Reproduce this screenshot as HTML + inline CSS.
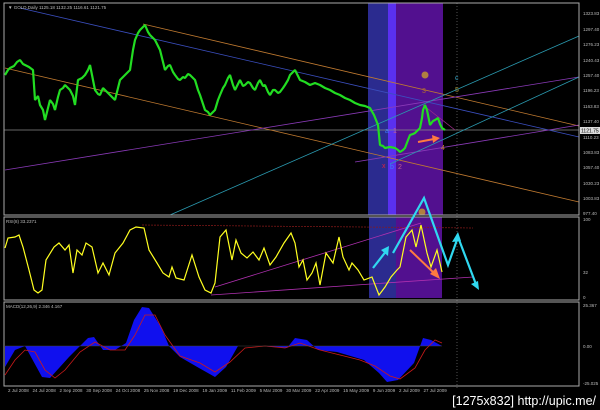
<!DOCTYPE html>
<html><head><meta charset="utf-8"><style>
html,body{margin:0;padding:0;background:#000;width:600px;height:410px;overflow:hidden}
svg{display:block}
text{font-family:"Liberation Sans",sans-serif}
</style></head><body>
<svg width="600" height="410" viewBox="0 0 600 410" xmlns="http://www.w3.org/2000/svg">
<rect width="600" height="410" fill="#000"/>
<rect x="368" y="3" width="20" height="212" fill="#2b2b8f"/>
<rect x="388" y="3" width="8" height="212" fill="#5a30f0"/>
<rect x="396" y="3" width="47" height="212" fill="#52108f"/>
<rect x="369" y="217" width="27" height="81" fill="#2b2b8f"/>
<rect x="396" y="217" width="46" height="81" fill="#52108f"/>
<line x1="457" y1="3" x2="457" y2="388" stroke="#888" stroke-width="0.6" stroke-dasharray="1,2"/>
<line x1="4" y1="130" x2="579" y2="130" stroke="#888" stroke-width="0.7"/>
<line x1="20" y1="8" x2="579" y2="137" stroke="#3b4fc0" stroke-width="0.8"/>
<line x1="143" y1="24" x2="579" y2="126" stroke="#c07a30" stroke-width="0.8"/>
<line x1="5" y1="68" x2="579" y2="202" stroke="#c07a30" stroke-width="0.8"/>
<line x1="5" y1="170" x2="579" y2="77" stroke="#8a3ab8" stroke-width="0.8"/>
<line x1="355" y1="162" x2="579" y2="125" stroke="#8a3ab8" stroke-width="0.8"/>
<line x1="170" y1="215" x2="579" y2="36" stroke="#2a9ab0" stroke-width="0.8"/>
<line x1="390" y1="164" x2="579" y2="77" stroke="#2a9ab0" stroke-width="0.8"/>
<line x1="423" y1="105" x2="455" y2="130" stroke="#a02a8a" stroke-width="0.7"/>
<polyline fill="none" stroke="#22dd22" stroke-width="2.2" stroke-linejoin="bevel" points="5,75 8,70 10,68 14,66 17,62 20,60 23,64 25,65 29,67 33,70 35,100 38,96 40,105 43,110 45,120 48,108 50,100 53,104 55,110 58,97 60,90 63,88 65,85 68,88 70,90 73,96 75,105 78,80 82,78 85,75 88,70 90,65 93,80 95,90 98,94 100,95 103,88 105,90 108,93 110,95 113,98 115,100 118,88 120,80 123,77 125,75 128,72 130,70 133,50 135,40 138,33 140,30 143,27 145,25 148,32 150,35 153,38 155,40 158,46 160,50 163,62 165,70 168,66 170,65 173,72 175,75 178,79 180,80 183,77 185,78 188,74 190,75 193,78 195,80 198,90 200,95 203,104 205,110 208,112 210,115 213,112 215,110 218,100 220,95 223,88 225,85 228,78 230,75 233,85 235,90 238,84 240,80 243,86 245,85 248,82 250,83 253,88 255,90 258,83 260,80 263,86 265,85 268,92 270,95 273,90 275,90 278,93 280,92 283,88 285,85 288,80 290,75 293,72 295,70 298,76 300,80 305,82 310,85 315,83 320,85 325,88 330,90 335,93 340,95 345,98 350,100 355,103 360,105 365,106 370,108 374,115 378,125 380,145 383,146 385,148 390,147 395,148 398,150 400,152 403,150 405,148 408,140 410,135 413,134 415,133 418,130 420,128 422,118 423,110 425,105 427,110 428,115 430,125 433,121 435,120 438,118 440,124 442,128 445,130"/>
<circle cx="425" cy="75" r="3.5" fill="#b08040"/>
<circle cx="422" cy="212" r="3.5" fill="#b08040"/>
<g font-size="7">
<text x="422" y="93" fill="#b06a30">3</text>
<text x="455" y="92" fill="#9a8a30">5</text>
<text x="455" y="80" fill="#30a0c0">c</text>
<text x="385" y="133" fill="#3a7aff">a</text>
<text x="393" y="133" fill="#c06090">1</text>
<text x="382" y="168" fill="#e02040">x</text>
<text x="390" y="169" fill="#3a7aff">b</text>
<text x="398" y="169" fill="#c06090">2</text>
<text x="441" y="150" fill="#c08030">4</text>
</g>
<line x1="418" y1="142" x2="434" y2="139" stroke="#ff7a40" stroke-width="2"/>
<polygon points="440,138 432,135 433,143" fill="#ff7a40"/>
<rect x="4" y="3" width="575" height="212" fill="none" stroke="#aaa" stroke-width="1"/>
<rect x="4" y="217" width="575" height="83" fill="none" stroke="#aaa" stroke-width="1"/>
<rect x="4" y="302" width="575" height="84" fill="none" stroke="#aaa" stroke-width="1"/>
<line x1="142" y1="225" x2="473" y2="228" stroke="#8a1a1a" stroke-width="0.7" stroke-dasharray="2,1"/>
<line x1="211" y1="295" x2="473" y2="277" stroke="#b030b0" stroke-width="0.8"/>
<line x1="215" y1="287" x2="421" y2="223" stroke="#b030b0" stroke-width="0.8"/>
<polyline fill="none" stroke="#ffff20" stroke-width="1.2" points="5,248 8,238 15,237 19,235 23,247 29,270 34,290 38,293 42,290 46,260 54,247 59,243 65,250 69,245 73,273 77,250 82,255 86,243 92,247 98,273 103,263 109,275 115,253 123,243 130,230 136,227 144,228 149,250 157,263 163,273 169,277 172,267 176,278 184,280 192,255 199,277 205,290 211,293 215,283 220,237 226,230 232,260 236,240 241,253 247,258 253,252 259,260 264,248 270,265 276,257 284,243 291,233 295,243 299,267 303,260 307,280 312,273 316,263 320,285 326,253 333,263 339,237 343,257 349,270 352,263 358,270 364,280 372,277 379,295 385,287 391,277 397,270 400,267 406,237 412,230 416,247 421,225 427,253 431,267 437,250 442,272"/>
<g stroke="#30d8f0" stroke-width="2.2" fill="none">
<polyline points="373,268 387,250"/>
<polyline points="393,253 424,198 448,265 458,237 477,287"/>
</g>
<g fill="#30d8f0">
<polygon points="389,246 381,250 388,256"/>
<polygon points="479,290 471,284 478,281"/>
<polygon points="458,232 452,242 461,241"/>
</g>
<line x1="410" y1="250" x2="435" y2="274" stroke="#ff7a40" stroke-width="2"/>
<polygon points="440,279 430,274 436,268" fill="#ff7a40"/>
<path fill="#1010ee" d="M5,346 L5,367 15,350 25,346 42,377 50,378 69,357 88,338 94,337 103,350 115,350 126,343 134,320 142,307 149,308 161,327 169,346 180,357 199,368 215,377 226,367 238,346 260,346 287,348 295,338 307,340 318,350 337,352 364,360 379,373 387,382 398,380 414,363 423,338 431,340 442,346 Z"/>
<polyline fill="none" stroke="#cc1a1a" stroke-width="0.8" points="5,375 15,360 25,350 35,352 45,370 55,378 65,370 80,352 95,342 110,350 125,350 135,335 145,315 155,315 165,335 180,356 200,363 215,372 230,362 245,348 265,346 285,348 300,343 320,350 340,355 360,360 375,366 390,376 400,379 415,368 425,350 435,340 442,343"/>
<line x1="4" y1="346" x2="442" y2="346" stroke="#444" stroke-width="0.5"/>
<g font-size="4.5" fill="#bbb">
<text x="8" y="9">▼ GOLD,Daily 1125.18 1132.25 1116.61 1121.75</text>
<text x="6" y="223">RSI(8) 33.2371</text>
<text x="6" y="308">MACD(12,26,9) 2.346 4.167</text>
<text x="583" y="15">1323.83</text><text x="583" y="31">1297.40</text><text x="583" y="46">1276.23</text><text x="583" y="62">1240.43</text><text x="583" y="77">1257.40</text><text x="583" y="92">1196.23</text><text x="583" y="108">1163.83</text><text x="583" y="123">1137.40</text><text x="583" y="139">1110.23</text><text x="583" y="154">1083.83</text><text x="583" y="169">1057.40</text><text x="583" y="185">1030.23</text><text x="583" y="200">1003.83</text><text x="583" y="215">977.40</text>
<text x="583" y="221">100</text><text x="583" y="274">32</text><text x="583" y="299">0</text>
<text x="583" y="307">25.367</text><text x="583" y="348">0.00</text><text x="583" y="385">-25.025</text>
<text x="8" y="392">2 Jul 2008 &#160; 24 Jul 2008 &#160; 2 Sep 2008 &#160; 30 Sep 2008 &#160; 24 Oct 2008 &#160; 25 Nov 2008 &#160; 19 Dec 2008 &#160; 19 Jan 2009 &#160; 11 Feb 2009 &#160; 5 Mar 2009 &#160; 30 Mar 2009 &#160; 22 Apr 2009 &#160; 15 May 2009 &#160; 9 Jun 2009 &#160; 2 Jul 2009 &#160; 27 Jul 2009</text>
</g>
<rect x="580" y="127" width="20" height="7" fill="#ddd"/>
<text x="581" y="132.5" font-size="5" fill="#000">1121.75</text>
<text x="596" y="405" font-size="12.5" fill="#fff" text-anchor="end">[1275x832] http://upic.me/</text>
</svg>
</body></html>
